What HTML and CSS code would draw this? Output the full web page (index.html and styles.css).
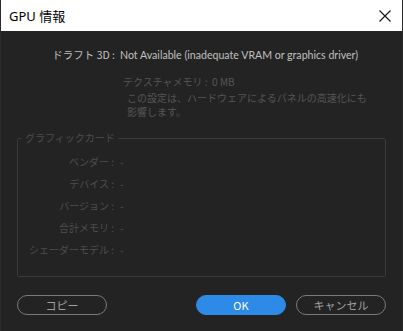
FILE: index.html
```html
<!DOCTYPE html>
<html lang="ja">
<head>
    <meta charset="UTF-8">
    <title>GPU 情報</title>
    <link rel="stylesheet" href="styles.css">
</head>
<body>
    <div class="window">
        <div class="titlebar">
            <span class="title">GPU 情報</span>
            <span class="close">
                <svg width="12" height="12" viewBox="0 0 12 12"><path d="M0.5 0.5 L11.5 11.5 M11.5 0.5 L0.5 11.5" stroke="#111" stroke-width="1.1" fill="none"/></svg>
            </span>
        </div>
        <div class="content">
            <div class="draft">
                <span class="draft-label">ドラフト 3D :</span>
                <span class="draft-value">Not Available (inadequate VRAM or graphics driver)</span>
            </div>
            <div class="memory">テクスチャメモリ :&nbsp; 0 MB</div>
            <p class="note">この設定は、ハードウェアによるパネルの高速化にも<br>影響します。</p>

            <fieldset class="card">
                <legend>グラフィックカード</legend>
                <div class="info-row"><span class="key">ベンダー :</span><span class="val">-</span></div>
                <div class="info-row"><span class="key">デバイス :</span><span class="val">-</span></div>
                <div class="info-row"><span class="key">バージョン :</span><span class="val">-</span></div>
                <div class="info-row"><span class="key">合計メモリ :</span><span class="val">-</span></div>
                <div class="info-row"><span class="key">シェーダーモデル :</span><span class="val">-</span></div>
            </fieldset>
        </div>
        <div class="footer">
            <button class="button">コピー</button>
            <div class="footer-right">
                <button class="button primary">OK</button>
                <button class="button">キャンセル</button>
            </div>
        </div>
    </div>
</body>
</html>
```

FILE: styles.css
```css
body {
    margin: 0;
    font-family: 'Noto Sans', 'Noto Sans CJK JP', sans-serif;
    background: #232323;
}

.window {
    width: 403px;
    height: 331px;
    box-sizing: border-box;
    border-left: 1px solid #2b2b2b;
    border-right: 1px solid #2b2b2b;
    background: #232323;
    display: flex;
    flex-direction: column;
}

.titlebar {
    height: 31px;
    background: #ffffff;
    display: flex;
    align-items: center;
    justify-content: space-between;
    padding: 0 11px 0 8px;
    flex-shrink: 0;
}

.title {
    font-size: 13px;
    color: #000;
    font-family: 'Noto Sans', 'Noto Sans CJK JP', sans-serif;
}

.close {
    display: flex;
    width: 12px;
    height: 12px;
}

.content {
    padding: 15px 16px 0 16px;
    flex: 1;
}

.draft {
    display: flex;
    gap: 5px;
    font-size: 10.5px;
    line-height: 18px;
    color: #c0c0c0;
}

.draft-label {
    width: 98px;
    text-align: right;
    font-family: 'Noto Sans CJK JP', sans-serif;
}

.draft-value {
    font-family: 'Lato', 'Noto Sans', sans-serif;
    font-size: 10.6px;
}

.memory {
    margin: 10px 0 0 106px;
    font-size: 10px;
    line-height: 16px;
    color: #555;
    font-family: 'Noto Sans CJK JP', sans-serif;
}

.note {
    margin: 1px 0 0 110px;
    font-size: 10px;
    line-height: 14px;
    color: #555;
    font-family: 'Noto Sans CJK JP', sans-serif;
}

.card {
    margin: 11px 0 0 0;
    padding: 5px 0 15px 0;
    border: 1px solid #3a3a3a;
    border-radius: 2px;
}

.card legend {
    margin-left: 4px;
    padding: 0 3px;
    font-size: 10px;
    line-height: 16px;
    color: #4e4e4e;
    font-family: 'Noto Sans CJK JP', sans-serif;
}

.info-row {
    display: flex;
    gap: 6px;
    font-size: 10px;
    line-height: 22px;
    color: #4e4e4e;
    font-family: 'Noto Sans CJK JP', sans-serif;
}

.key {
    width: 96px;
    text-align: right;
}

.footer {
    display: flex;
    justify-content: space-between;
    padding: 0 16px 16px 16px;
}

.footer-right {
    display: flex;
    gap: 10px;
}

.button {
    width: 90px;
    height: 20px;
    border: 1px solid #7a7a7a;
    border-radius: 10px;
    background: transparent;
    color: #a0a0a0;
    font-size: 11px;
    font-family: 'Noto Sans CJK JP', sans-serif;
    padding: 0;
    line-height: 18px;
}

.button.primary {
    background: #2d8ae6;
    border-color: #2d8ae6;
    color: #ffffff;
}
```
